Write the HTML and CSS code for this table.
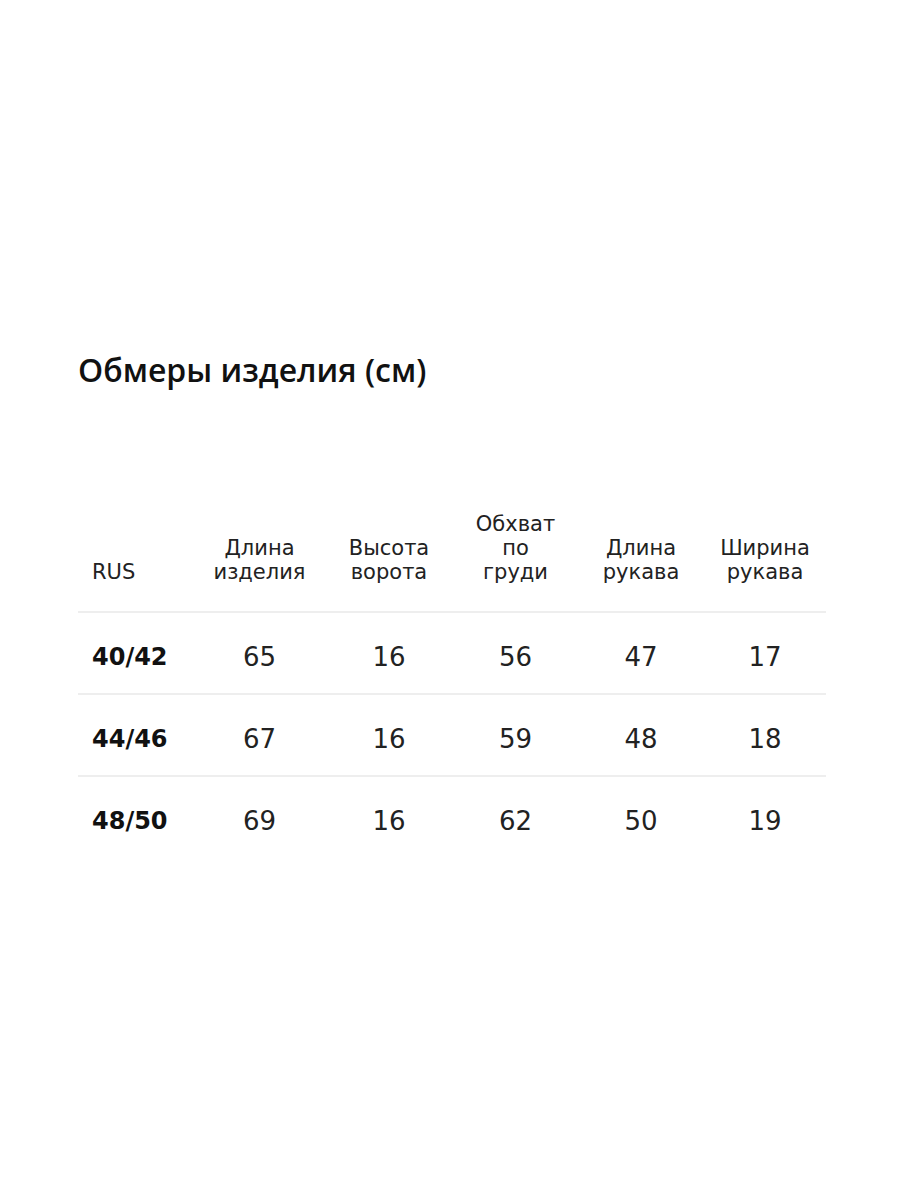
FILE: index.html
```html
<!DOCTYPE html>
<html lang="ru">
<head>
<meta charset="utf-8">
<link rel="stylesheet" href="styles.css">
</head>
<body>
<main class="page">
  <h1 class="title">Обмеры изделия (см)</h1>
  <div class="table">
    <div class="row head">
      <div class="cell first">RUS</div>
      <div class="cell">Длина<br>изделия</div>
      <div class="cell">Высота<br>ворота</div>
      <div class="cell">Обхват<br>по<br>груди</div>
      <div class="cell">Длина<br>рукава</div>
      <div class="cell">Ширина<br>рукава</div>
    </div>
    <div class="row data">
      <div class="cell first">40/42</div>
      <div class="cell">65</div>
      <div class="cell">16</div>
      <div class="cell">56</div>
      <div class="cell">47</div>
      <div class="cell">17</div>
    </div>
    <div class="row data">
      <div class="cell first">44/46</div>
      <div class="cell">67</div>
      <div class="cell">16</div>
      <div class="cell">59</div>
      <div class="cell">48</div>
      <div class="cell">18</div>
    </div>
    <div class="row data">
      <div class="cell first">48/50</div>
      <div class="cell">69</div>
      <div class="cell">16</div>
      <div class="cell">62</div>
      <div class="cell">50</div>
      <div class="cell">19</div>
    </div>
  </div>
</main>
</body>
</html>
```

FILE: styles.css
```css
html, body {
  margin: 0;
  padding: 0;
  background: #ffffff;
}
.page {
  padding: 348px 0 0 78px;
  width: 748px;
  font-family: "DejaVu Sans", "Open Sans", sans-serif;
  color: #1a1a1a;
}
.title {
  margin: 0;
  font-family: "Open Sans", "Noto Sans", sans-serif;
  font-size: 32px;
  line-height: 44px;
  font-weight: 600;
  color: #111;
}
.table {
  margin-top: 120px;
}
.row {
  display: grid;
  grid-template-columns: 116px 131px 128px 125px 126px 122px;
}
.cell {
  text-align: center;
}
.cell.first {
  text-align: left;
  padding-left: 14px;
}
.head {
  align-items: end;
  font-size: 21px;
  line-height: 24px;
  color: #222;
  padding-bottom: 27px;
}
.data {
  border-top: 2px solid #eeeeee;
  height: 72px;
  padding-top: 8px;
  align-items: center;
  font-size: 26px;
  color: #222;
}
.data .first {
  font-size: 24px;
  font-weight: 700;
  color: #111;
}
```
